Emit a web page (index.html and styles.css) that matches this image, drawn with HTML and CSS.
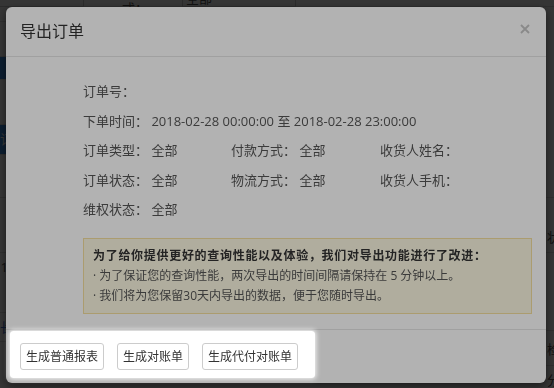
FILE: index.html
```html
<!DOCTYPE html>
<html lang="zh-CN">
<head>
    <meta charset="UTF-8">
    <title>导出订单</title>
    <link rel="stylesheet" href="styles.css">
</head>
<body>
<div class="page">
    <div class="filter-bar">
        <span class="select select-short"><i class="caret"></i></span>
        <span class="filter-label">付款方式：</span>
        <span class="select select-wide">全部<i class="caret"></i></span>
    </div>
    <div class="page-main">
        <ul class="side-list">
            <li></li>
            <li></li>
            <li class="active"></li>
            <li></li>
            <li class="active">订单</li>
            <li></li>
            <li></li>
            <li>1</li>
            <li class="link">长</li>
        </ul>
        <ul class="right-list">
            <li>状态</li>
            <li></li>
            <li>检查</li>
            <li>分类</li>
        </ul>
    </div>
</div>

<div class="backdrop"></div>

<div class="modal">
    <div class="modal-header">
        <h4 class="modal-title">导出订单</h4>
        <span class="close">
            <svg width="10" height="10" viewBox="0 0 10 10">
                <path d="M1 1L9 9M9 1L1 9" stroke="#c4c4c4" stroke-width="1.8" fill="none"/>
            </svg>
        </span>
    </div>
    <div class="modal-body">
        <div class="info-row">订单号：</div>
        <div class="info-row">下单时间： 2018-02-28 00:00:00 至 2018-02-28 23:00:00</div>
        <div class="info-grid">
            <span>订单类型： 全部</span>
            <span>付款方式： 全部</span>
            <span>收货人姓名：</span>
            <span>订单状态： 全部</span>
            <span>物流方式： 全部</span>
            <span>收货人手机：</span>
            <span>维权状态： 全部</span>
        </div>
        <div class="notice">
            <p class="notice-title">为了给你提供更好的查询性能以及体验，我们对导出功能进行了改进：</p>
            <p>· 为了保证您的查询性能，两次导出的时间间隔请保持在 5 分钟以上。</p>
            <p>· 我们将为您保留30天内导出的数据，便于您随时导出。</p>
        </div>
    </div>
    <div class="modal-footer">
        <button class="btn">生成普通报表</button>
        <button class="btn">生成对账单</button>
        <button class="btn">生成代付对账单</button>
        <div class="tour-spot"></div>
    </div>
</div>
</body>
</html>
```

FILE: styles.css
```css
* {
    margin: 0;
    padding: 0;
    box-sizing: border-box;
}

body {
    font-family: "Open Sans", "Noto Sans CJK SC", sans-serif;
    font-size: 13px;
    color: #555;
    background: #fff;
    overflow: hidden;
}

li {
    list-style: none;
}

/* page behind the dialog */
.page {
    height: 388px;
    overflow: hidden;
}

.filter-bar {
    display: flex;
    align-items: center;
    height: 18px;
    margin-top: -11px;
    border-bottom: 1px solid #ddd;
}

.select {
    display: flex;
    justify-content: space-between;
    align-items: center;
    height: 18px;
    padding: 0 4px 0 3px;
    border: 1px solid #ccc;
}

.select-short {
    width: 84px;
    border-left: 0;
}

.select-wide {
    width: 114px;
}

.filter-label {
    margin-left: 38px;
    width: 60px;
}

.caret {
    width: 0;
    height: 0;
    margin-left: auto;
    border-left: 3px solid transparent;
    border-right: 3px solid transparent;
    border-top: 4px solid #444;
}

.page-main {
    display: flex;
    justify-content: space-between;
}

.side-list {
    width: 60px;
}

.side-list li {
    border-bottom: 1px solid #ddd;
    text-align: right;
    padding-right: 54px;
    line-height: 28px;
    white-space: nowrap;
}

.side-list li:nth-child(1) { height: 15px; }
.side-list li:nth-child(2) { height: 35px; }
.side-list li:nth-child(3) { height: 23px; }
.side-list li:nth-child(4) { height: 45px; }
.side-list li:nth-child(5) { height: 30px; }
.side-list li:nth-child(6) { height: 43px; }
.side-list li:nth-child(7) { height: 55px; }
.side-list li:nth-child(8) { height: 60px; padding-right: 52px; }

.side-list .active {
    background: #3a8ee6;
    color: #fff;
}

.side-list .link {
    color: #3a6fd8;
}

.right-list {
    width: 60px;
    margin-top: 190px;
}

.right-list li {
    height: 55px;
    border-top: 1px solid #ddd;
    padding: 29px 0 0 53px;
    line-height: 20px;
    white-space: nowrap;
    overflow: hidden;
}

.right-list li:nth-child(2) { height: 78px; }
.right-list li:nth-child(3) { height: 35px; padding-top: 8px; }
.right-list li:nth-child(4) { padding-top: 4px; }

.backdrop {
    position: fixed;
    top: 0;
    right: 0;
    bottom: 0;
    left: 0;
    background: rgba(0, 0, 0, .7);
    z-index: 1040;
}

/* dialog */
.modal {
    position: fixed;
    top: 7px;
    left: 6px;
    width: 540px;
    background: #fff;
    border-radius: 6px;
    box-shadow: 0 3px 9px rgba(0, 0, 0, .5);
    z-index: 1050;
}

.modal-header {
    display: flex;
    justify-content: space-between;
    align-items: center;
    padding: 13px 16px 14px 14px;
    border-bottom: 1px solid #e5e5e5;
}

.modal-title {
    font-size: 16px;
    font-weight: normal;
    line-height: 22px;
    color: #333;
}

.close {
    display: flex;
    margin-top: -4px;
}

.modal-body {
    padding: 20px 14px 15px 77px;
}

.info-row {
    line-height: 29.5px;
    white-space: nowrap;
}

.info-grid {
    display: grid;
    grid-template-columns: 148px 149px auto;
    line-height: 29.5px;
    white-space: nowrap;
}

.notice {
    margin-top: 13px;
    padding: 7px 9px;
    background: #fcf8e3;
    border: 1px solid #f5e0a0;
    font-size: 12px;
    line-height: 20px;
}

.notice-title {
    font-weight: bold;
    color: #333;
    letter-spacing: .7px;
}

.modal-footer {
    position: relative;
    display: flex;
    gap: 13px;
    padding: 13px 14px;
    border-top: 1px solid #e5e5e5;
}

.btn {
    font: inherit;
    font-size: 12px;
    line-height: 17px;
    padding: 4px 5px;
    color: #333;
    background: #fff;
    border: 1px solid #ccc;
    border-radius: 3px;
}

/* guide highlight over the footer buttons */
.tour-spot {
    position: absolute;
    top: 1px;
    left: 4px;
    width: 305px;
    height: 47px;
    border-radius: 3px;
    box-shadow: 0 0 5px 1px rgba(255, 255, 255, .9), 0 0 0 2000px rgba(0, 0, 0, .3);
}
```
